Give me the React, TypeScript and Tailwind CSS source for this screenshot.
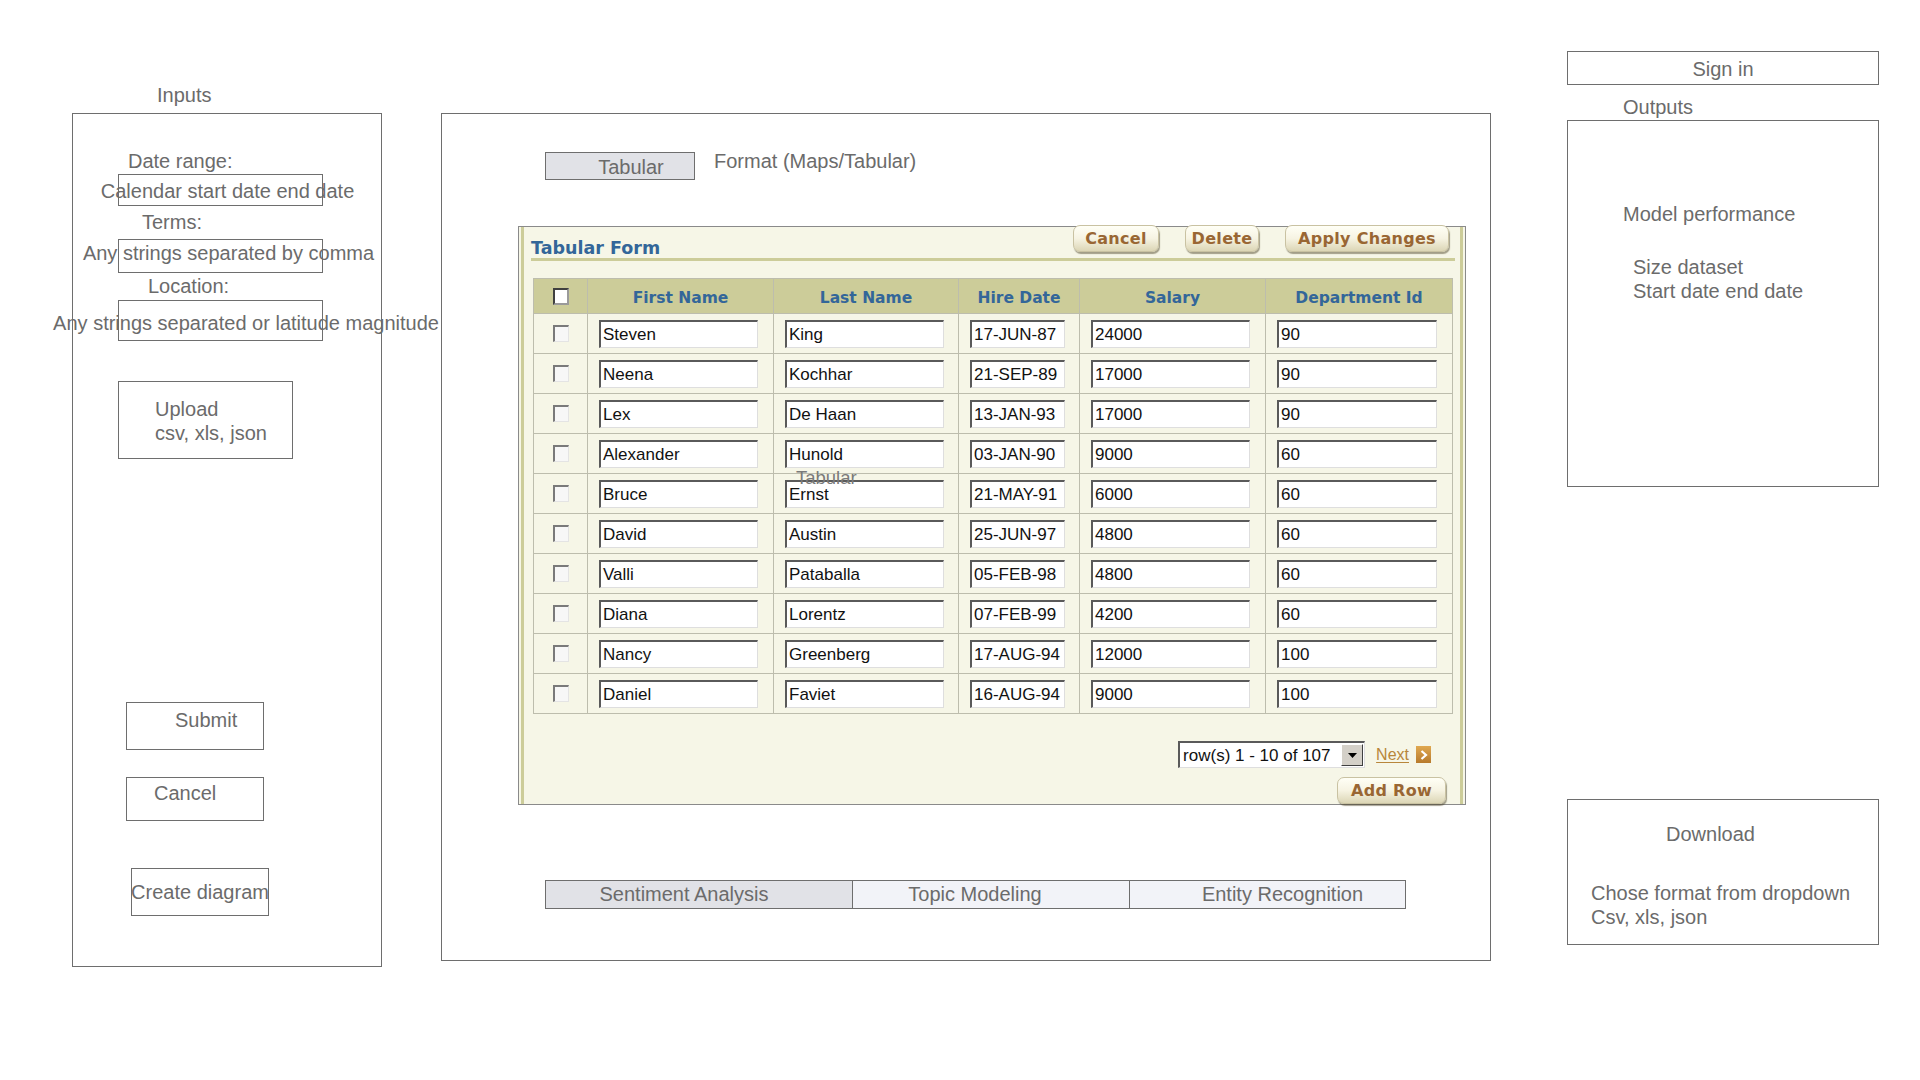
import React from "react";

const rows: string[][] = [
  ["Steven", "King", "17-JUN-87", "24000", "90"],
  ["Neena", "Kochhar", "21-SEP-89", "17000", "90"],
  ["Lex", "De Haan", "13-JAN-93", "17000", "90"],
  ["Alexander", "Hunold", "03-JAN-90", "9000", "60"],
  ["Bruce", "Ernst", "21-MAY-91", "6000", "60"],
  ["David", "Austin", "25-JUN-97", "4800", "60"],
  ["Valli", "Pataballa", "05-FEB-98", "4800", "60"],
  ["Diana", "Lorentz", "07-FEB-99", "4200", "60"],
  ["Nancy", "Greenberg", "17-AUG-94", "12000", "100"],
  ["Daniel", "Faviet", "16-AUG-94", "9000", "100"],
];

const inputWidths = ["w-[159px]", "w-[159px]", "w-[95px]", "w-[159px]", "w-[160px]"];
const headers = ["First Name", "Last Name", "Hire Date", "Salary", "Department Id"];

function ApexButton({ label, w }: { label: string; w: string }) {
  return (
    <div
      className={`${w} h-[27px] flex items-center justify-center rounded-[7px] border border-[#c9c2a2] bg-gradient-to-b from-[#fffff6] via-[#f6f3e2] to-[#dcd6b6] shadow-[1px_2px_1px_rgba(60,50,20,0.45)] font-['DejaVu_Sans',sans-serif] font-bold text-[16px] text-[#996633] tracking-[0.3px] leading-none`}
    >
      {label}
    </div>
  );
}

function RowCheckbox() {
  return (
    <div className="w-[16px] h-[17px] bg-[#f7f7f7] border-t-2 border-l-2 border-r border-b border-t-[#7a7a7a] border-l-[#7a7a7a] border-r-[#e4e4e4] border-b-[#e4e4e4]" />
  );
}

function TextInput({ value, w }: { value: string; w: string }) {
  return (
    <div
      className={`${w} h-[28px] bg-white border-t-2 border-l-2 border-r border-b border-t-[#5a5a5a] border-l-[#5a5a5a] border-r-[#dedede] border-b-[#dedede] flex items-center pl-[2px] pt-[1px] font-['Liberation_Sans',Arial,sans-serif] text-[17px] text-[#111] leading-none whitespace-nowrap overflow-hidden`}
    >
      {value}
    </div>
  );
}

export default function App() {
  return (
    <div className="w-[1920px] h-[1080px] bg-white flex items-start font-['Liberation_Sans',Arial,sans-serif] text-[20px] leading-[24px] text-[#6b6b6b] overflow-hidden">
      {/* Left column: Inputs */}
      <div className="ml-[72px] w-[310px] flex flex-col">
        <div className="mt-[83px] pl-[85px] h-[24px]">Inputs</div>
        <div className="mt-[6px] h-[854px] border border-[#6e6e6e] flex flex-col items-start">
          <div className="mt-[35px] ml-[55px] whitespace-nowrap">Date range:</div>
          <div className="mt-[1px] ml-[45px] w-[205px] h-[32px] border border-[#6e6e6e] flex items-center justify-center pl-[14px] pt-[2px] whitespace-nowrap">
            <span className="whitespace-nowrap">Calendar start date end date</span>
          </div>
          <div className="mt-[4px] ml-[69px] whitespace-nowrap">Terms:</div>
          <div className="mt-[5px] ml-[45px] w-[205px] h-[34px] border border-[#6e6e6e] flex items-center justify-center pl-[16px] pb-[7px] whitespace-nowrap">
            <span className="whitespace-nowrap">Any strings separated by comma</span>
          </div>
          <div className="mt-[1px] ml-[75px] whitespace-nowrap">Location:</div>
          <div className="mt-[2px] ml-[45px] w-[205px] h-[41px] border border-[#6e6e6e] flex items-center justify-center pl-[51px] pt-[5px] whitespace-nowrap">
            <span className="whitespace-nowrap">Any strings separated or latitude magnitude</span>
          </div>
          <div className="mt-[40px] ml-[45px] w-[175px] h-[78px] border border-[#6e6e6e] pl-[36px] pt-[15px]">
            <div>Upload</div>
            <div>csv, xls, json</div>
          </div>
          <div className="mt-[243px] ml-[53px] w-[138px] h-[48px] border border-[#6e6e6e] pl-[48px] pt-[5px]">Submit</div>
          <div className="mt-[27px] ml-[53px] w-[138px] h-[44px] border border-[#6e6e6e] pl-[27px] pt-[3px]">Cancel</div>
          <div className="mt-[47px] ml-[58px] w-[138px] h-[48px] border border-[#6e6e6e] flex items-center justify-center whitespace-nowrap">
            <span className="whitespace-nowrap">Create diagram</span>
          </div>
        </div>
      </div>

      {/* Middle panel */}
      <div className="ml-[59px] mt-[113px] w-[1050px] h-[848px] border border-[#6e6e6e] flex flex-col items-start">
        <div className="mt-[38px] ml-[103px] flex items-start">
          <div className="w-[150px] h-[28px] bg-[#e1e2e7] border border-[#6e6e6e] flex items-center justify-center pt-[2px] pl-[22px]">Tabular</div>
          <div className="ml-[19px] -mt-[3px] whitespace-nowrap">Format (Maps/Tabular)</div>
        </div>

        {/* Tabular form */}
        <div className="relative mt-[46px] ml-[76px] w-[948px] h-[579px] border border-[#8a8a8a] bg-[#f6f6e7] shadow-[inset_2px_0_0_#f6f6e7,inset_5px_0_0_#cccc99,inset_-2px_0_0_#f6f6e7,inset_-5px_0_0_#cccc99] flex flex-col">
          <div className="h-[33px] pl-[12px] pr-[16px] flex items-start justify-between">
            <div className="mt-[11px] h-[20px] leading-[20px] font-['DejaVu_Sans',sans-serif] font-bold text-[17.5px] text-[#336699] whitespace-nowrap">
              Tabular Form
            </div>
            <div className="-mt-[2px] flex items-start gap-[26px]">
              <ApexButton label="Cancel" w="w-[86px]" />
              <ApexButton label="Delete" w="w-[74px]" />
              <ApexButton label="Apply Changes" w="w-[164px]" />
            </div>
          </div>
          <div className="ml-[12px] mr-[10px] h-[3px] bg-[#cccc99]" />

          <div className="mt-[17px] ml-[14px] w-[920px] grid grid-cols-[53px_185px_184px_120px_185px_186px] grid-rows-[34px_repeat(10,39px)] gap-px bg-[#bdbdad] border border-[#bdbdad]">
            <div className="bg-[#cccc99] flex items-center justify-center">
              <div className="w-[16px] h-[17px] bg-white border-t-2 border-l-2 border-r-2 border-b-2 border-t-[#404040] border-l-[#404040] border-r-[#9a9a9a] border-b-[#9a9a9a]" />
            </div>
            {headers.map((h) => (
              <div
                key={h}
                className="bg-[#cccc99] flex items-center justify-center pt-[3px] font-['DejaVu_Sans',sans-serif] font-bold text-[15.5px] text-[#336699] whitespace-nowrap"
              >
                {h}
              </div>
            ))}
            {rows.map((r, i) => (
              <React.Fragment key={i}>
                <div className="bg-[#f6f6e7] flex items-center justify-center">
                  <RowCheckbox />
                </div>
                {r.map((v, j) => (
                  <div key={j} className="bg-[#f6f6e7] flex items-center pl-[11px]">
                    <TextInput value={v} w={inputWidths[j]} />
                  </div>
                ))}
              </React.Fragment>
            ))}
          </div>

          <div className="mt-[27px] pr-[34px] flex items-center justify-end">
            <div className="w-[187px] h-[27px] bg-white border-t-2 border-l-2 border-r border-b border-t-[#5a5a5a] border-l-[#5a5a5a] border-r-[#dedede] border-b-[#dedede] flex items-center justify-between">
              <span className="pl-[3px] text-[17px] text-[#111] leading-none whitespace-nowrap">row(s) 1 - 10 of 107</span>
              <div className="w-[22px] h-[22px] mr-[1px] bg-[#d4d0c8] border-t border-l border-r border-b border-t-white border-l-white border-r-[#404040] border-b-[#404040] flex items-center justify-center">
                <svg width="9" height="5" viewBox="0 0 9 5">
                  <path d="M0 0 H9 L4.5 5 Z" fill="#000" />
                </svg>
              </div>
            </div>
            <span className="ml-[11px] text-[16px] leading-none text-[#b8863b] underline underline-offset-2 whitespace-nowrap">Next</span>
            <div className="ml-[7px] w-[15px] h-[17px] bg-gradient-to-b from-[#e0a850] to-[#b77a2c] flex items-center justify-center">
              <svg width="8" height="10" viewBox="0 0 8 10">
                <path d="M1.5 1 L6 5 L1.5 9" stroke="#fff" strokeWidth="2.2" fill="none" />
              </svg>
            </div>
          </div>
          <div className="mt-[9px] pr-[19px] flex justify-end">
            <ApexButton label="Add Row" w="w-[109px]" />
          </div>

          <div className="absolute left-[277px] top-[240px] leading-[22px] text-[18.5px] text-[#7a7a7a] whitespace-nowrap">
            Tabular
          </div>
        </div>

        {/* Tabs */}
        <div className="mt-[75px] ml-[103px] flex h-[29px]">
          <div className="w-[308px] h-[29px] bg-[#e1e2e7] border border-[#6e6e6e] flex items-center justify-center pr-[30px] pb-[2px] whitespace-nowrap">
            Sentiment Analysis
          </div>
          <div className="w-[277px] h-[29px] bg-[#f2f3f8] border-y border-r border-[#6e6e6e] flex items-center justify-center pr-[32px] pb-[2px] whitespace-nowrap">
            Topic Modeling
          </div>
          <div className="w-[276px] h-[29px] bg-[#f2f3f8] border-y border-r border-[#6e6e6e] flex items-center justify-center pl-[30px] pb-[2px] whitespace-nowrap">
            Entity Recognition
          </div>
        </div>
      </div>

      {/* Right column */}
      <div className="ml-[76px] w-[312px] flex flex-col">
        <div className="mt-[51px] h-[34px] border border-[#6e6e6e] flex items-center justify-center pt-[2px]">Sign in</div>
        <div className="mt-[10px] pl-[56px] h-[24px]">Outputs</div>
        <div className="mt-[1px] h-[367px] border border-[#6e6e6e] flex flex-col">
          <div className="mt-[81px] pl-[55px]">Model performance</div>
          <div className="mt-[29px] pl-[65px]">
            <div>Size dataset</div>
            <div>Start date end date</div>
          </div>
        </div>
        <div className="mt-[312px] h-[146px] border border-[#6e6e6e] flex flex-col">
          <div className="mt-[22px] pl-[98px]">Download</div>
          <div className="mt-[35px] pl-[23px]">
            <div>Chose format from dropdown</div>
            <div>Csv, xls, json</div>
          </div>
        </div>
      </div>
    </div>
  );
}
